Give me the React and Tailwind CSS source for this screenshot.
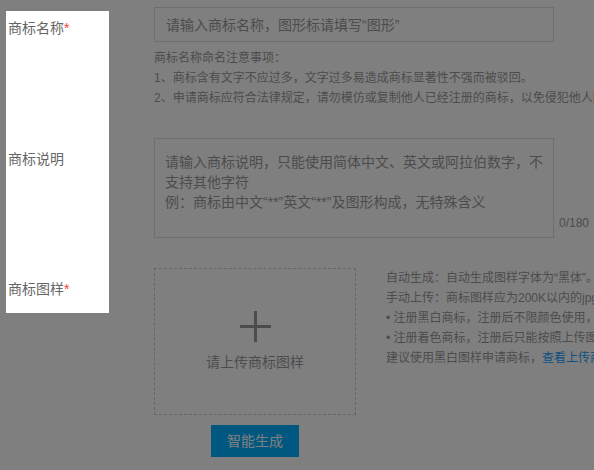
import React from 'react';

const Label = ({ text, required }) => (
  <div className="relative z-30 w-[154px] shrink-0 pl-2 pt-[11px] text-[14px] leading-5 text-[#666]">
    {text}
    {required && <span className="text-[#ff3b3b]">*</span>}
  </div>
);

const App = () => {
  return (
    <div className="relative w-[594px] h-[470px] overflow-hidden bg-white font-['Liberation_Sans','Noto_Sans_CJK_SC',sans-serif]">
      {/* Form */}
      <div className="flex flex-col">
        {/* 商标名称 */}
        <div className="flex pt-[7px]">
          <Label text="商标名称" required />
          <div className="flex flex-col">
            <input
              type="text"
              placeholder="请输入商标名称，图形标请填写“图形”"
              className="w-[400px] h-[35px] border border-[#ddd] px-[11px] text-[14px] text-[#333] outline-none placeholder:text-[#999]"
            />
            <div className="mt-[6px] text-[12px] leading-5 text-[#999] whitespace-nowrap">
              <p>商标名称命名注意事项：</p>
              <p>1、商标含有文字不应过多，文字过多易造成商标显著性不强而被驳回。</p>
              <p>2、申请商标应符合法律规定，请勿模仿或复制他人已经注册的商标，以免侵犯他人的合法权益。</p>
            </div>
          </div>
        </div>

        {/* 商标说明 */}
        <div className="flex mt-[30px]">
          <Label text="商标说明" />
          <div className="flex items-end">
            <textarea
              placeholder={'请输入商标说明，只能使用简体中文、英文或阿拉伯数字，不支持其他字符\n例：商标由中文“**”英文“**”及图形构成，无特殊含义'}
              className="w-[400px] h-[100px] resize-none border border-[#ddd] px-[10px] pt-[13px] text-[14px] leading-5 text-[#333] outline-none placeholder:text-[#999]"
            />
            <span className="ml-[5px] mb-[5px] text-[12px] leading-5 text-[#999]">0/180</span>
          </div>
        </div>

        {/* 商标图样 */}
        <div className="flex mt-[30px]">
          <Label text="商标图样" required />
          <div className="flex flex-col items-center w-[202px] shrink-0">
            <div className="w-[202px] h-[147px] border border-dashed border-[#ccc] flex flex-col items-center pt-[42px]">
              <svg width="31" height="31" viewBox="0 0 31 31">
                <rect x="0" y="14" width="31" height="3" fill="#999" />
                <rect x="14" y="0" width="3" height="31" fill="#999" />
              </svg>
              <span className="mt-[10px] text-[14px] leading-5 text-[#999]">请上传商标图样</span>
            </div>
            <button className="mt-[10px] w-[88px] h-[32px] bg-[#00aeff] text-white text-[14px]">
              智能生成
            </button>
          </div>
          <div className="ml-[30px] text-[12px] leading-5 text-[#999] whitespace-nowrap">
            <p>自动生成：自动生成图样字体为“黑体”。如需其他字体请手动上传</p>
            <p>手动上传：商标图样应为200K以内的jpg格式图片，尺寸为800*800像素</p>
            <p>• 注册黑白商标，注册后不限颜色使用，可以任意着色</p>
            <p>• 注册着色商标，注册后只能按照上传图样的颜色使用</p>
            <p>
              建议使用黑白图样申请商标，
              <span className="text-[#1a9fff]">查看上传商标图样要求</span>
            </p>
          </div>
        </div>
      </div>

      {/* Guide overlay */}
      <div className="absolute inset-0 z-10 bg-black/50" />
      <div className="absolute left-[6px] top-[11px] z-20 w-[103px] h-[302px] bg-white" />
    </div>
  );
};

export default App;
